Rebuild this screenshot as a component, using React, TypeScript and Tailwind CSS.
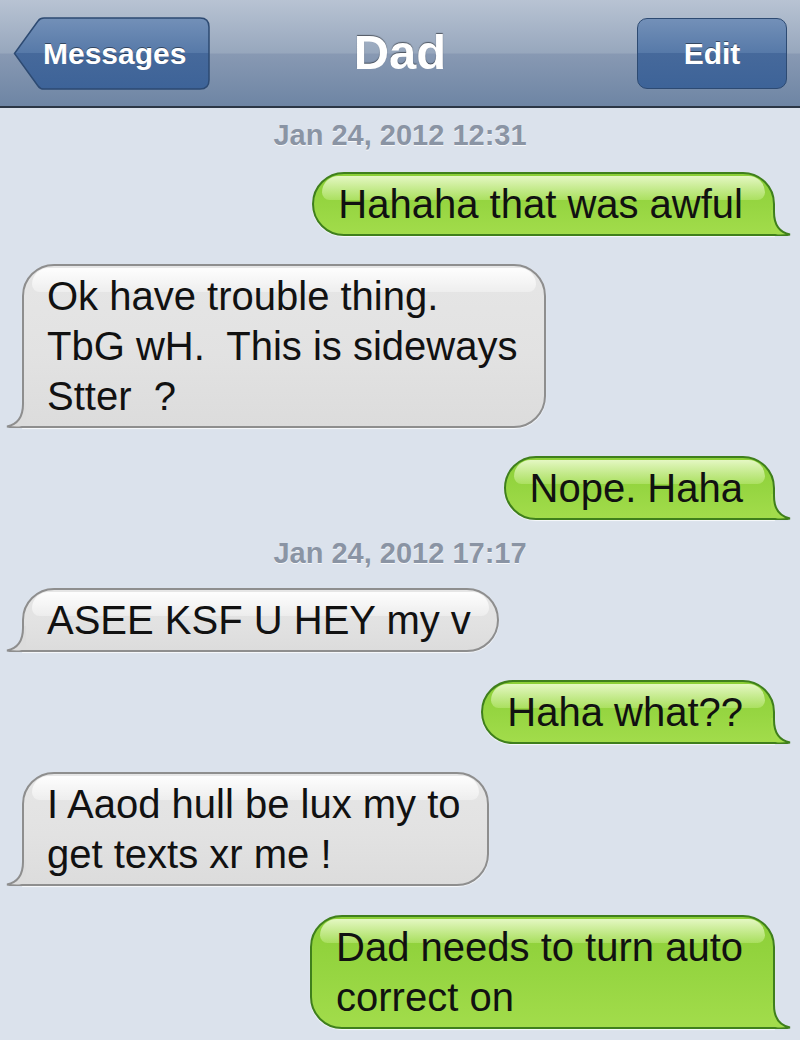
import React from 'react';

type Side = 'me' | 'them';

interface Msg {
  kind: 'msg';
  side: Side;
  lines: string[];
  mt: string;
}

interface Stamp {
  kind: 'stamp';
  text: string;
  mt: string;
}

const thread: (Msg | Stamp)[] = [
  { kind: 'stamp', text: 'Jan 24, 2012 12:31', mt: 'mt-[13px]' },
  { kind: 'msg', side: 'me', lines: ['Hahaha that was awful'], mt: 'mt-[22px]' },
  {
    kind: 'msg',
    side: 'them',
    lines: ['Ok have trouble thing.', 'TbG wH.  This is sideways', 'Stter  ?'],
    mt: 'mt-[28px]'
  },
  { kind: 'msg', side: 'me', lines: ['Nope. Haha'], mt: 'mt-[28px]' },
  { kind: 'stamp', text: 'Jan 24, 2012 17:17', mt: 'mt-[19px]' },
  { kind: 'msg', side: 'them', lines: ['ASEE KSF U HEY my v'], mt: 'mt-[20px]' },
  { kind: 'msg', side: 'me', lines: ['Haha what??'], mt: 'mt-[28px]' },
  { kind: 'msg', side: 'them', lines: ['I Aaod hull be lux my to', 'get texts xr me !'], mt: 'mt-[28px]' },
  { kind: 'msg', side: 'me', lines: ['Dad needs to turn auto', 'correct on'], mt: 'mt-[29px]' }
];

const Tail: React.FC<{ side: Side }> = ({ side }) => {
  const me = side === 'me';
  const fill = me ? '#a2dc4b' : '#dcdcdc';
  const stroke = me ? '#3f7f1c' : '#8e8e8e';
  return (
    <svg
      width="30"
      height="30"
      viewBox="0 0 30 30"
      className={`absolute -bottom-[2px] ${me ? '-right-[18px]' : '-left-[18px] -scale-x-100'}`}
    >
      <path d="M10 4 L13 4 C13 18 17 26 29 28.5 C24 29.5 19 30 14 29 L10 29 Z" fill={fill} />
      <path
        d="M13 2 L13 6 C13 18 17 26 29 28.5 C24 29.5 19 30 14 29 L9 29"
        fill="none"
        stroke={stroke}
        strokeWidth="2"
      />
    </svg>
  );
};

const Bubble: React.FC<{ msg: Msg }> = ({ msg }) => {
  const me = msg.side === 'me';
  return (
    <div className={`flex ${me ? 'justify-end pr-[25px]' : 'justify-start pl-[22px]'} ${msg.mt}`}>
      <div
        className={`relative rounded-[32px] border-2 py-[5px] text-[40px] leading-[50px] text-[#111] shadow-[0_1px_1px_rgba(255,255,255,0.8)] ${
          me
            ? 'rounded-br-none border-[#3f7f1c] pl-[24px] pr-[30px] bg-[linear-gradient(to_bottom,#8ccf37_0%,#97d642_55%,#a2dc4b_100%)]'
            : 'rounded-bl-none border-[#8e8e8e] pl-[23px] pr-[26px] bg-[linear-gradient(to_bottom,#e6e6e6_0%,#e2e2e2_55%,#dcdcdc_100%)]'
        }`}
      >
        <div
          className={`absolute left-[8px] right-[8px] top-[2px] h-[24px] rounded-t-[26px] rounded-b-[12px] ${
            me
              ? 'bg-[linear-gradient(to_bottom,rgba(238,252,210,0.9),rgba(205,242,145,0.4))]'
              : 'bg-[linear-gradient(to_bottom,rgba(255,255,255,0.95),rgba(255,255,255,0.35))]'
          }`}
        />
        <div className="relative">
          {msg.lines.map((line, i) => (
            <div key={i} className="whitespace-pre">
              {line}
            </div>
          ))}
        </div>
        <Tail side={msg.side} />
      </div>
    </div>
  );
};

const BackButton: React.FC = () => (
  <div className="relative h-[73px] w-[197px]">
    <svg width="197" height="73" viewBox="0 0 197 73" className="absolute inset-0">
      <defs>
        <linearGradient id="backGrad" x1="0" y1="0" x2="0" y2="1">
          <stop offset="0" stopColor="#7390b8" />
          <stop offset="0.5" stopColor="#5679a8" />
          <stop offset="0.5" stopColor="#46699b" />
          <stop offset="1" stopColor="#3d6398" />
        </linearGradient>
      </defs>
      <path
        d="M1.5 36.5 L25 4 Q27 1 31 1 L187 1 Q196 1 196 10 L196 63 Q196 72 187 72 L31 72 Q27 72 25 69 Z"
        fill="url(#backGrad)"
        stroke="#2d4a72"
        strokeWidth="1.5"
      />
    </svg>
    <div className="relative flex h-full items-center pl-[30px] text-[30px] font-bold text-white [text-shadow:0_-1px_0_rgba(0,0,0,0.45)]">
      Messages
    </div>
  </div>
);

const EditButton: React.FC = () => (
  <div className="flex h-[71px] w-[150px] items-center justify-center rounded-[10px] border-[1.5px] border-[#2d4a72] bg-[linear-gradient(to_bottom,#7390b8_0%,#5679a8_50%,#46699b_50%,#3d6398_100%)] text-[30px] font-bold text-white [text-shadow:0_-1px_0_rgba(0,0,0,0.45)]">
    Edit
  </div>
);

export default function App() {
  return (
    <div className="min-h-[1040px] w-[800px] overflow-hidden bg-[#dbe2ec] font-['Liberation_Sans',Arial,sans-serif]">
      {/* Nav bar */}
      <div className="grid h-[108px] grid-cols-[1fr_auto_1fr] items-center border-b-2 border-[#2b3645] bg-[linear-gradient(to_bottom,#b8c3d3_0%,#97a7bd_50%,#8899b3_51%,#6e85a4_100%)] px-[13px]">
        <div className="justify-self-start">
          <BackButton />
        </div>
        <div className="text-[49px] font-bold text-white [text-shadow:0_-1px_1px_rgba(0,0,0,0.5)]">Dad</div>
        <div className="justify-self-end">
          <EditButton />
        </div>
      </div>

      {/* Conversation */}
      <div className="flex flex-col">
        {thread.map((item, i) =>
          item.kind === 'stamp' ? (
            <div
              key={i}
              className={`${item.mt} text-center text-[29px] font-bold leading-[29px] text-[#8a94a4] [text-shadow:0_1px_0_rgba(255,255,255,0.8)]`}
            >
              {item.text}
            </div>
          ) : (
            <Bubble key={i} msg={item} />
          )
        )}
      </div>
    </div>
  );
}
